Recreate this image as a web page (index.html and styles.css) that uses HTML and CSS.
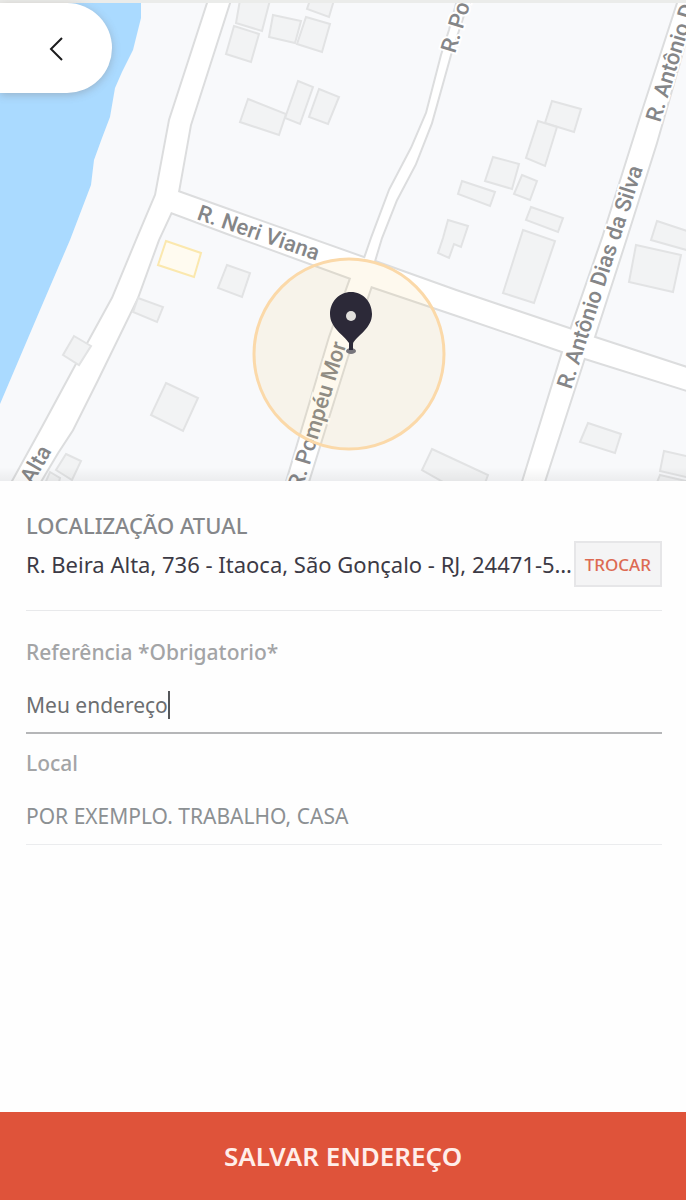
FILE: index.html
```html
<!DOCTYPE html>
<html lang="pt-BR">
  <head>
    <meta charset="UTF-8" />
    <meta name="viewport" content="width=device-width, initial-scale=1.0" />
    <title>Salvar endereço</title>
    <link rel="stylesheet" href="styles.css" />
  </head>
  <body>
    <header class="map">
      <svg class="map-canvas" viewBox="0 3 686 478" role="img" aria-label="Mapa">
        <defs>
          <!-- street outlines, drawn twice: casing first, then surface -->
          <g id="streets">
            <path d="M209 0L170 120L156 195L137 240L113 298L90 340L43 427L11 485H38L57 453L72 430L97 380L137 298L158 240L171 212L178 192L190 125L230 0Z" />
            <path d="M178 192L234 212L375 262L456 291L572 330L595 338L690 369V391L585 358L562 351L457 315L371 286L351 278L230 234L171 212L160 200Z" />
            <path d="M458 0L450 30L442 55L427 113L412 148L390 190L372 238L363 264L372 268L381 238L396 200L415 164L431 123L450 55L468 0Z" />
            <path d="M354 270L330 337L286 485H307L347 357L373 280Z" />
            <path d="M679 0L641 117L603 238L571 330L563 352L522 485H543L584 358L594 337L626 238L656 143L697 0Z" />
          </g>
        </defs>

        <rect class="land" x="0" y="3" width="686" height="478" />
        <path class="water" d="M0 0H141V18L133 50L122 72L115 88L110 117L102 138L94 160L91 185L70 240L40 310L0 404Z" />

        <use class="street-casing" href="#streets" />
        <use class="street" href="#streets" />

        <g class="buildings">
          <path d="M240 0H270L262 31L236 23Z" />
          <path d="M234 26L259 34L251 62L226 54Z" />
          <path d="M273 15L301 21L295 43L269 37Z" />
          <path d="M306 17L330 24L322 52L297 44Z" />
          <path d="M310 0H334L329 17L307 9Z" />
          <path d="M298 81L313 87L300 124L285 118Z" />
          <path d="M319 89L339 97L328 124L309 117Z" />
          <path d="M248 99L286 114L279 135L240 122Z" />
          <path d="M552 101L581 109L574 132L545 123Z" />
          <path d="M538 121L557 127L545 166L526 158Z" />
          <path d="M493 157L519 164L512 189L485 181Z" />
          <path d="M522 175L537 181L530 200L514 194Z" />
          <path d="M462 181L495 192L490 206L458 194Z" />
          <path d="M531 207L563 218L558 232L526 220Z" />
          <path d="M523 230L555 241L534 303L503 293Z" />
          <path d="M448 220L468 226L461 247L454 244L449 258L438 253L443 238Z" />
          <path d="M657 221L690 232V251L651 240Z" />
          <path d="M636 245L681 255L673 292L629 282Z" />
          <path d="M588 423L621 434L615 453L580 442Z" />
          <path d="M664 451L690 457V478L660 471Z" />
          <path d="M660 475L690 482V490L656 485Z" />
          <path d="M432 449L488 475L484 486H450L422 470Z" />
          <path d="M138 298L163 307L157 322L133 312Z" />
          <path d="M74 336L91 346L79 365L63 355Z" />
          <path d="M166 383L198 398L183 431L151 415Z" />
          <path d="M66 454L81 461L72 480L56 470Z" />
          <path d="M50 472L60 478L58 486H44Z" />
          <path d="M227 265L250 273L242 297L218 288Z" />
          <path class="highlight" d="M166 241L201 253L194 277L158 265Z" />
        </g>

        <g class="street-names">
          <text transform="translate(196 219) rotate(19)">R. Neri Viana</text>
          <text transform="translate(302 490) rotate(-73)">R. Pompéu Mor</text>
          <text transform="translate(455 54) rotate(-73)">R. Pompéu</text>
          <text transform="translate(571 390) rotate(-72)">R. Antônio Dias da Silva</text>
          <text transform="translate(660 123) rotate(-73)">R. Antônio Dias</text>
          <text transform="translate(52 451) rotate(-60)" text-anchor="end">R. Beira Alta</text>
        </g>

        <circle class="radius" cx="349" cy="354" r="95" />

        <ellipse class="pin-base" cx="351" cy="351" rx="5" ry="3" />
        <path class="pin" d="M351 292C339 292 330 302 330 314C330 328 344 335 349 343V350H353V343C358 335 372 328 372 314C372 302 363 292 351 292Z" />
        <circle class="pin-hole" cx="351" cy="316" r="5" />
      </svg>

      <button class="back" type="button" aria-label="Voltar">
        <svg width="16" height="26" viewBox="0 0 16 26">
          <path d="M14 3L3 14L14 25" />
        </svg>
      </button>
    </header>

    <form class="address-form">
      <section class="current">
        <h1>LOCALIZAÇÃO ATUAL</h1>
        <div class="current-row">
          <p class="address">R. Beira Alta, 736 - Itaoca, São Gonçalo - RJ, 24471-530</p>
          <button class="change" type="button">TROCAR</button>
        </div>
      </section>

      <div class="field">
        <label for="reference">Referência *Obrigatorio*</label>
        <div class="input-row active">
          <input type="text" id="reference" class="filled" value="Meu endereço" />
          <span class="caret"></span>
        </div>
      </div>

      <div class="field">
        <label for="place">Local</label>
        <div class="input-row">
          <input type="text" id="place" placeholder="POR EXEMPLO. TRABALHO, CASA" />
        </div>
      </div>

      <button class="save" type="submit">SALVAR ENDEREÇO</button>
    </form>
  </body>
</html>
```

FILE: styles.css
```css
* {
  box-sizing: border-box;
}
body {
  margin: 0;
  min-height: 100vh;
  display: flex;
  flex-direction: column;
  background: #fefefe;
  font-family: "Noto Sans", "Open Sans", sans-serif;
}
button,
input {
  font-family: inherit;
}

/* map */
.map {
  position: relative;
  border-top: 3px solid #ebecea;
}
.map::after {
  content: "";
  position: absolute;
  left: 0;
  right: 0;
  bottom: 0;
  height: 14px;
  background: linear-gradient(rgba(0, 0, 0, 0), rgba(0, 0, 0, 0.05));
}
.map-canvas {
  display: block;
  width: 100%;
  height: auto;
}
.land {
  fill: #f8f9fb;
}
.water {
  fill: #aadaff;
}
.street-casing {
  fill: none;
  stroke: #dcddde;
  stroke-width: 4px;
}
.street {
  fill: #fff;
}
.buildings path {
  fill: #f2f3f4;
  stroke: #e2e3e4;
  stroke-width: 2px;
}
.buildings .highlight {
  fill: #fffbf0;
  stroke: #fbe8ae;
}
.street-names {
  font-family: Roboto, sans-serif;
  font-size: 22px;
  font-weight: 500;
  fill: #858688;
  stroke: #fff;
  stroke-width: 4px;
  paint-order: stroke;
}
.radius {
  fill: rgba(250, 195, 90, 0.1);
  stroke: #fbd9a9;
  stroke-width: 3px;
}
.pin {
  fill: #2c2938;
}
.pin-base {
  fill: #77757c;
}
.pin-hole {
  fill: #e2e0dd;
}
.back {
  position: absolute;
  top: 0;
  left: 0;
  width: 112px;
  height: 90px;
  padding: 0;
  border: none;
  border-radius: 0 45px 45px 0;
  background: #fff;
  box-shadow: 0 2px 8px rgba(110, 90, 80, 0.3);
  cursor: pointer;
}
.back svg {
  display: block;
  margin: 0 auto;
  fill: none;
  stroke: #1c1c1e;
  stroke-width: 2px;
}

/* form */
.address-form {
  flex: 1;
  display: flex;
  flex-direction: column;
}
.current {
  margin: 0 24px 12px 26px;
  padding: 28px 0 23px;
  border-bottom: 1px solid #e8e9eb;
}
h1 {
  margin: 0;
  font-size: 22px;
  line-height: 32px;
  font-weight: 500;
  color: #85878a;
}
.current-row {
  display: flex;
  align-items: center;
}
.address {
  flex: 1;
  min-width: 0;
  margin: 0;
  overflow: hidden;
  text-overflow: ellipsis;
  white-space: nowrap;
  font-size: 22px;
  line-height: 32px;
  color: #3c3a45;
}
.change {
  height: 46px;
  padding: 0 9px;
  border: 2px solid #e6e6e8;
  background: #f4f4f5;
  color: #dd6a53;
  font-size: 17px;
  font-weight: 500;
  cursor: pointer;
}
.field {
  margin: 0 24px 0 26px;
}
.field label {
  display: block;
  padding-top: 13px;
  font-size: 21px;
  line-height: 32px;
  font-weight: 500;
  color: #a3a4a6;
}
.input-row {
  display: flex;
  align-items: center;
  height: 66px;
  padding-top: 9px;
  border-bottom: 1px solid #ebecee;
}
.input-row.active {
  border-bottom: 2px solid #b5b6b8;
}
.input-row input {
  flex: 1;
  min-width: 0;
  padding: 0;
  border: none;
  outline: none;
  background: none;
  font-size: 21px;
  line-height: 32px;
  color: #6c6e71;
}
.input-row .filled {
  flex: none;
  max-width: 100%;
  field-sizing: content;
}
.input-row input::placeholder {
  color: #8c9093;
  opacity: 1;
}
.caret {
  width: 2px;
  height: 28px;
  background: #55575a;
}
.save {
  width: 100%;
  height: 88px;
  margin-top: auto;
  border: none;
  background: #df533a;
  color: #ffeeea;
  font-size: 26px;
  font-weight: 600;
  cursor: pointer;
}
```
